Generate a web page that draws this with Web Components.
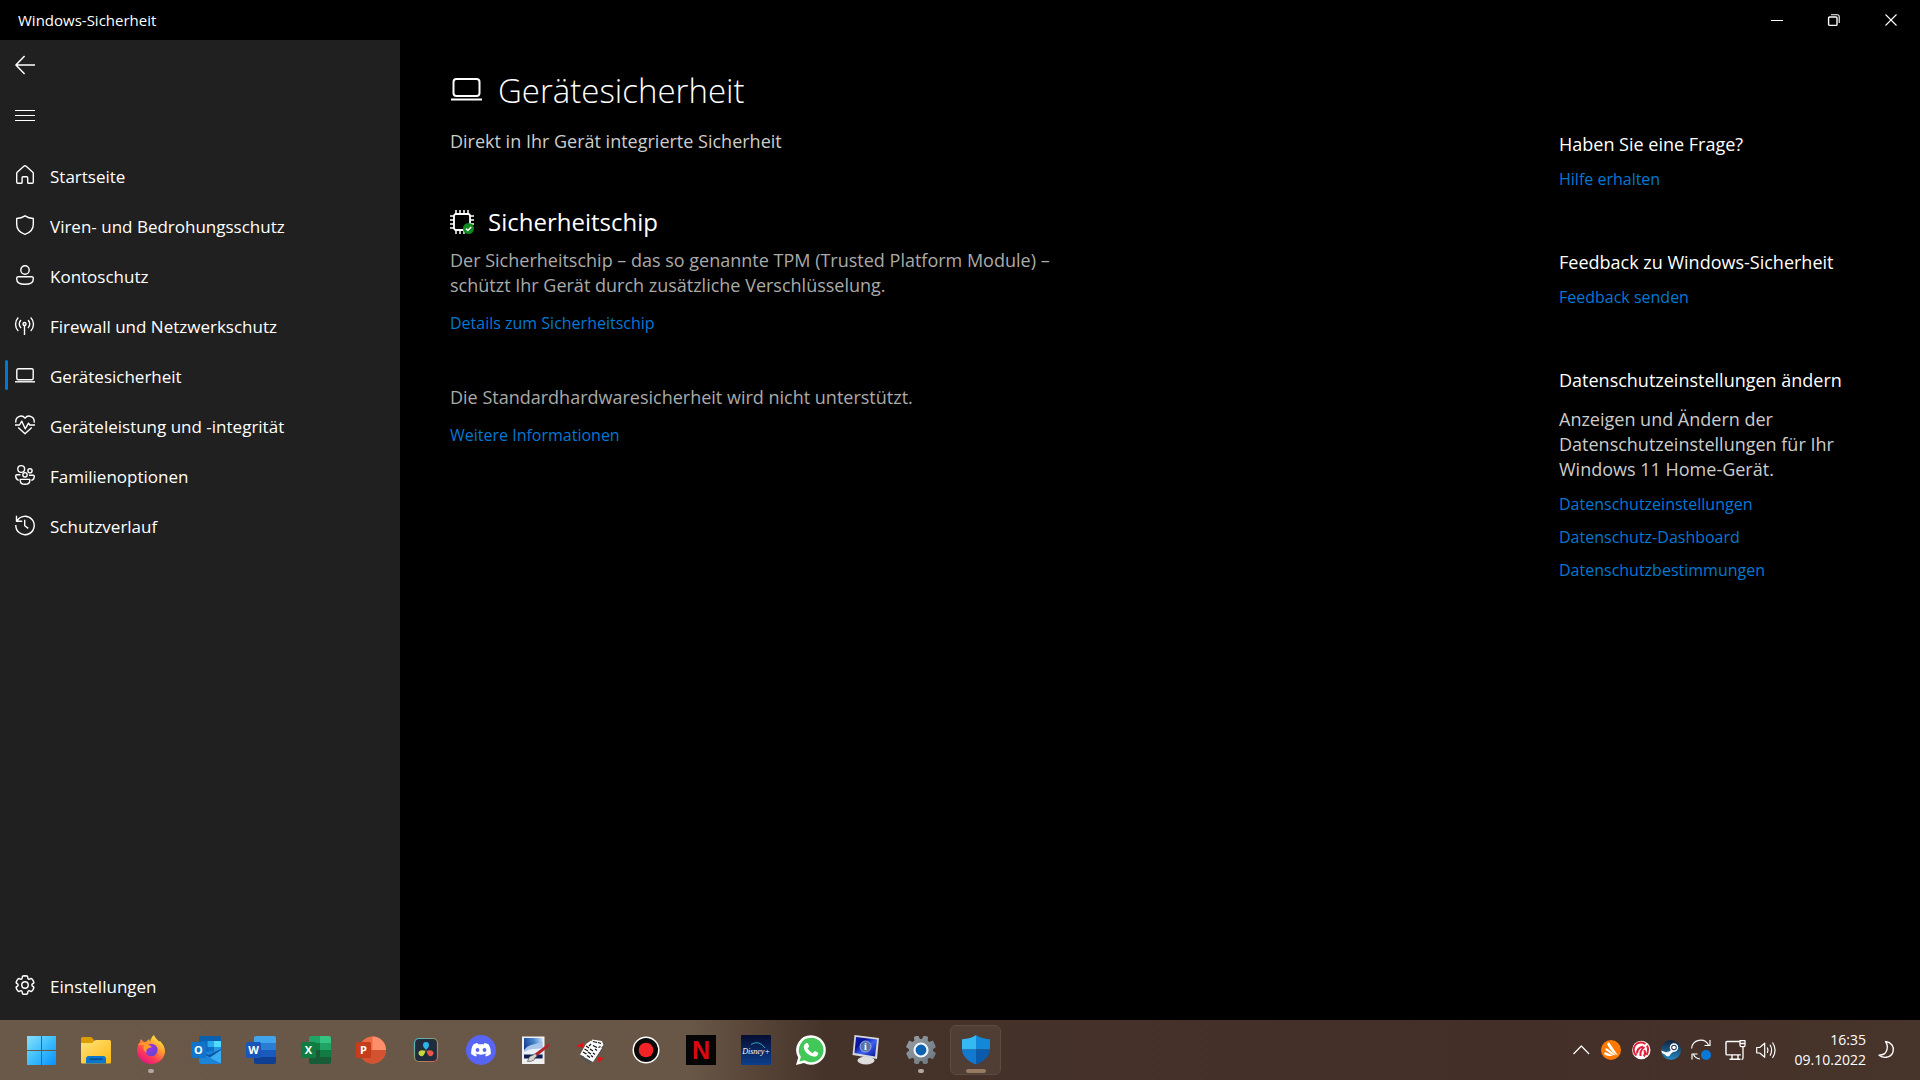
<!DOCTYPE html>
<html lang="de">
<head>
<meta charset="utf-8">
<meta name="viewport" content="width=device-width, initial-scale=1">
<title>Windows-Sicherheit</title>
<style>
	html, body {
		height: 100%;
		margin: 0;
	}
	body {
		background: #000;
		color: #fff;
		font: 18px/25px "Segoe UI", "Open Sans", "Noto Sans", sans-serif;
		--accent: #0078d4;
	}
</style>
</head>
<body>
<security-app></security-app>

<script>
(function() {
	const gear = "M12.012 2.25c.734.008 1.465.093 2.182.253a.75.75 0 0 1 .582.649l.17 1.527a1.384 1.384 0 0 0 1.927 1.116l1.401-.615a.75.75 0 0 1 .85.174 9.792 9.792 0 0 1 2.204 3.792.75.75 0 0 1-.271.825l-1.242.916a1.381 1.381 0 0 0 0 2.226l1.243.915a.75.75 0 0 1 .272.826 9.797 9.797 0 0 1-2.204 3.792.75.75 0 0 1-.848.175l-1.407-.617a1.38 1.38 0 0 0-1.926 1.114l-.169 1.526a.75.75 0 0 1-.572.647 9.518 9.518 0 0 1-4.406 0 .75.75 0 0 1-.572-.647l-.168-1.524a1.382 1.382 0 0 0-1.926-1.11l-1.406.616a.75.75 0 0 1-.849-.175 9.798 9.798 0 0 1-2.204-3.796.75.75 0 0 1 .272-.826l1.243-.916a1.38 1.38 0 0 0 0-2.226l-1.243-.914a.75.75 0 0 1-.271-.826 9.793 9.793 0 0 1 2.204-3.792.75.75 0 0 1 .85-.174l1.4.615a1.387 1.387 0 0 0 1.93-1.118l.17-1.526a.75.75 0 0 1 .583-.65c.717-.159 1.45-.243 2.201-.252z";

	// name: [viewBox size, markup]
	const icons = {
		back: [20, `<path d="M20 10H1M9.6 1 .9 10l8.7 9" stroke-width="1.5"/>`],
		menu: [20, `<path d="M0 5.5h20M0 10.5h20M0 15.5h20" stroke-width="1"/>`],
		home: [20, `<path d="M9.1 1.1 2.2 7.2q-.5.5-.5 1.2v8.700q0 1.200 1.200 1.200h3.300q.9 0 .9-.9v-4.700q0-.9.9-.9h3.800q.9 0 .9.9v4.700q0 .9.9.9h3.500q1.200 0 1.200-1.200V8.400q0-.7-.5-1.200L10.900 1.100q-.9-.7-1.800 0z"/>`],
		shield: [20, `<path d="M10 .8C7.600 2.400 5 3.300 1.700 3.500v6c0 4.900 3 8 8.300 9.900 5.300-1.900 8.300-5 8.300-9.900v-6C15 3.300 12.400 2.400 10 .8z"/>`],
		account: [20, `<circle cx="10" cy="5" r="4.200"/><path d="M3.200 11.800h13.600q1.500 0 1.500 1.500v.7c0 3.500-3.300 5.300-8.300 5.300S1.700 17.500 1.700 14v-.7q0-1.500 1.500-1.500z"/>`],
		firewall: [20, `<circle cx="9.500" cy="9" r="1.500"/><path d="M9.500 10.500V20M6 12.900a5.200 5.200 0 0 1 0-7.800M13 5.100a5.200 5.200 0 0 1 0 7.800M3.300 15.900a9.500 9.500 0 0 1 0-13.400M15.700 2.500a9.500 9.500 0 0 1 0 13.400"/>`],
		laptop: [20, `<rect x="1.800" y="3.800" width="16.400" height="11" rx="1.500"/><path d="M0 16.800h20"/>`],
		laptopBig: [32, `<rect x="3.500" y="4" width="26" height="17" rx="3" stroke-width="2"/><path d="M1 24.500h31" stroke-width="2"/>`],
		heart: [20, `<path d="M.8 7.600C.1 1.700 6.800-1 10 3.200 13.200-1 19.900 1.700 19.200 7.600M3.200 12.500 10 18.800l6.800-6.300M0 10h4.500l2.300-3.800 3.400 7.600 3.300-5.600L14.800 10H20"/>`],
		family: [20, `<circle cx="6.200" cy="4" r="3.400"/><circle cx="15" cy="5.800" r="2.100"/><circle cx="10" cy="9.800" r="2.200"/><path d="M5.200 14.400h9.600v1.100c0 2.400-1.900 3.800-4.800 3.800s-4.800-1.400-4.800-3.800zM5.500 9.800H1.800Q.7 9.800.7 11c0 2.200 1.200 3.800 3 4.400M14 10.200h4.200q1.100 0 1.100 1.100c0 2.200-1 3.700-3 4"/>`],
		history: [20, `<path d="M1.900 6.100A9.200 9.200 0 1 1 .8 10M1.500 .8v5.500h5.700M9.700 4.800v5.900l3.600 2.700"/>`],
		settings: [20, `<g transform="translate(-1.400 -1.400) scale(.95)"><path d="${gear}" stroke-width="1.500"/><circle cx="12" cy="12" r="3.400" stroke-width="1.500"/></g>`],
		chip: [24, `<rect x="4" y="4" width="16" height="16" rx="2" stroke-width="1.800"/>
			<path d="M6 0v4M10 0v4M14 0v4M18 0v4M6 20v4M10 20v4M14 20v4M0 6h4M0 10h4M0 14h4M0 18h4M20 6h4M20 10h4M20 14h4" stroke-width="1.500"/>
			<circle cx="18.500" cy="18.500" r="5.500" fill="#0f8a1c" stroke="none"/><path d="m15.900 18.600 1.900 1.900 3.400-3.600" stroke-width="1.500"/>`],
		minimize: [12, `<path d="M0 6.500h12" stroke-width="1"/>`],
		restore: [12, `<rect x=".6" y="3" width="8.400" height="8.400" rx="1"/><path d="M3 .8h6.200q2 0 2 2V9" stroke-width="1.100"/>`],
		close: [12, `<path d="m.5.500 11 11m0-11-11 11" stroke-width="1.100"/>`],

		start: [30, `<defs><linearGradient id="g" x1="0" y1="0" x2="30" y2="30" gradientUnits="userSpaceOnUse"><stop stop-color="#8ee2ff"/><stop offset=".5" stop-color="#3fc0fc"/><stop offset="1" stop-color="#0790fb"/></linearGradient></defs>
			<path d="M1 1h14v14H1zM16 1h14v14H16zM1 16h14v14H1zM16 16h14v14H16z" fill="url(#g)" stroke="none"/>`],
		explorer: [30, `<defs><linearGradient id="g" x2="1" y2="1"><stop stop-color="#ffe27a"/><stop offset="1" stop-color="#fdb913"/></linearGradient></defs>
			<g stroke="none"><path d="M0 3.500Q0 2 1.500 2h8q1 0 2 1.200L13 5v6H0z" fill="#dc9d04"/>
			<path d="M0 8h10.500q1 0 2-1.500T15 5h13.500Q30 5 30 6.500v20.800q0 1.200-1.200 1.200H1.200Q0 28.500 0 27.300z" fill="url(#g)"/>
			<path d="M5 28.500V24q0-3 3-3h14q3 0 3 3v4.500z" fill="#0a76cc"/><path d="M8.500 24.200h13" stroke="#074c8c" stroke-width="1.500"/></g>`],
		firefox: [30, `<defs><linearGradient id="g" x1=".9" y1=".1" x2=".3" y2="1"><stop stop-color="#fff14a"/><stop offset=".35" stop-color="#ffa22c"/><stop offset=".7" stop-color="#ff3d54"/><stop offset="1" stop-color="#e31587"/></linearGradient>
			<linearGradient id="p" x2="1" y2="1"><stop stop-color="#b12cf2"/><stop offset="1" stop-color="#5848c8"/></linearGradient></defs>
			<g stroke="none"><path d="M18 0c1 3 3.500 4.500 5 6.500l1-.5C28 10 29 13.500 29 16.500 28.500 24 22.500 29 15 29S1 23 1 15.500C1 12 2.300 8.500 4 7L4.500 4 8 7l2.500-.5L13 4l1 3C14.500 4 16 1.500 18 0z" fill="url(#g)"/>
			<circle cx="15.300" cy="15" r="6.300" fill="url(#p)"/>
			<path d="M2 10c3-3.500 8-3 11 0l3 2-4 1.500c-1.500.5-2 2-1.500 4-3-1-4-5-2-7.500-2-.5-4 0-6.500 0z" fill="#ff9a2b"/></g>`],
		outlook: [30, `<g stroke="none"><path d="M8 3q0-2 2-2h18q2 0 2 2v24q0 2-2 2H10q-2 0-2-2z" fill="#0a5fae"/>
			<path d="M10 6h6.500v6H10zM10 12h6.500v7H10z" fill="#0f6cc0"/><path d="M16.500 6H23v6h-6.500z" fill="#29a8ea"/><path d="M23 6h7v6h-7z" fill="#52d9ff"/><path d="M16.500 12H23v7h-6.500z" fill="#0f6fc6"/><path d="M23 12h7v6h-7z" fill="#2197e6"/>
			<path d="M8 17l22-1v11q0 2-2 2H10q-2 0-2-2z" fill="#1b84d8"/><path d="M8 17l22 11.500V15L19 21.500z" fill="#3aaef2"/><path d="M8 17l11 5.500L30 15v-1L18 20z" fill="#0a54a4"/>
			<rect x="0" y="7" width="15" height="16" rx="1.500" fill="#0f74cc"/><text x="7.500" y="19" fill="#fff" font-size="11" font-weight="700" text-anchor="middle">O</text></g>`],
		word: [30, `<g stroke="none"><path d="M8 3q0-2 2-2h18q2 0 2 2v5H8z" fill="#41a5ee"/><path d="M8 8h22v7H8z" fill="#2b7cd3"/><path d="M8 15h22v7H8z" fill="#185abd"/><path d="M8 22h22v5q0 2-2 2H10q-2 0-2-2z" fill="#103f91"/>
			<rect x="0" y="7" width="15" height="16" rx="1.500" fill="#1857b8"/><text x="7.500" y="19" fill="#fff" font-size="11" font-weight="700" text-anchor="middle">W</text></g>`],
		excel: [30, `<g stroke="none"><path d="M8 3q0-2 2-2h9v7H8z" fill="#21a366"/><path d="M19 1h9q2 0 2 2v5H19z" fill="#33c481"/><path d="M8 8h11v7H8z" fill="#107c41"/><path d="M19 8h11v7H19z" fill="#21a366"/><path d="M19 15h11v7H19z" fill="#107c41"/><path d="M8 15h11v7h11v5q0 2-2 2H10q-2 0-2-2z" fill="#185c37"/>
			<rect x="0" y="7" width="15" height="16" rx="1.500" fill="#107c41"/><text x="7.500" y="19" fill="#fff" font-size="11" font-weight="700" text-anchor="middle">X</text></g>`],
		powerpoint: [30, `<g stroke="none"><circle cx="16.500" cy="15" r="13.500" fill="#ed6c47"/><path d="M16.500 1.500A13.500 13.500 0 0 1 30 15H16.500z" fill="#ff8f6b"/><path d="M3 15h27a13.500 13.500 0 0 1-27 0z" fill="#d35230"/>
			<rect x="0" y="7" width="15" height="16" rx="1.500" fill="#c43e1c"/><text x="7.500" y="19" fill="#fff" font-size="11" font-weight="700" text-anchor="middle">P</text></g>`],
		resolve: [30, `<defs><linearGradient id="g" x2="1" y2="1"><stop stop-color="#3fc1d8"/><stop offset=".45" stop-color="#8f9a6a"/><stop offset="1" stop-color="#e0604f"/></linearGradient></defs>
			<rect x="3.500" y="3.500" width="23" height="23" rx="4.500" fill="#1f2c3d" stroke="url(#g)" stroke-width="1.200"/>
			<g stroke="none" transform="translate(-.5)"><path d="M15.500 15c-1.500-1.500-3-3-3-5a3 3 0 0 1 6 0c0 2-1.500 3.500-3 5z" fill="#2bb5e8"/><path d="M15 15.800c-.5 2-1.200 4.300-2.800 5.100a3 3 0 0 1-3.200-5c1.800-1.200 4-.7 6-.1z" fill="#c5d93a"/><path d="M16 15.800c2-.6 4.200-1.100 6 .1a3 3 0 0 1-3.200 5c-1.600-.8-2.300-3.100-2.800-5.100z" fill="#ee5548"/></g>`],
		discord: [30, `<g stroke="none"><circle cx="15" cy="15" r="15" fill="#5865f2"/>
			<path d="M11.500 8c-2 .3-3.500 1-4.200 1.600C5.500 12.500 5 16.500 5.200 19c1.500 1.200 3 2 4.800 2.400l1-1.700-1.500-.8.300-.3c3.400 1.500 7 1.500 10.400 0l.3.300-1.500.8 1 1.700c1.800-.4 3.300-1.200 4.800-2.400.3-3.400-.5-6.600-2.100-9.400C22 9 20.500 8.300 18.500 8l-.6 1.200h-5.800z" fill="#fff"/><circle cx="11.500" cy="15" r="1.900" fill="#5865f2"/><circle cx="18.500" cy="15" r="1.900" fill="#5865f2"/></g>`],
		paint: [30, `<defs><linearGradient id="g" x1="1" y1="0" x2="0" y2=".4"><stop stop-color="#cfe0f5"/><stop offset=".45" stop-color="#4a86cf"/><stop offset="1" stop-color="#123f94"/></linearGradient></defs>
			<g stroke="none"><path d="M1 1.500h22.500v27.500H1z" fill="#f0f0f0"/><path d="M3 3h18.500v20H3z" fill="url(#g)"/><path d="M3 15q3-4 7-5t11.500-3v13H3z" fill="#a9c6ea"/><path d="M3 17q5-3 9-3t9.500-1v7H3z" fill="#e8f0fa"/><path d="M3 19.500h18.500v4H3z" fill="#111f55"/>
			<path d="M27.500 8.500 14 18.500l2.200 2.500L29 10.500z" fill="#b3252d"/><path d="m14 18.500-2.500 2q-1.500-.5-3.500 2L6.500 26.500q4 .3 6.500-1.500 1-1 .7-2l2.500-2z" fill="#d6d2cc" stroke="#444" stroke-width=".6"/></g>`],
		cards: [30, `<g stroke="none"><path d="M.5 11.500 3 9.500l1.500 0L7 7.500V13l-2-1.500-1.500.5zM28 22.500 22.500 27.500l-.5-5 2-.5 1.500 1z" fill="#f00d12"/>
			<path d="m11 9 6-4 4 1 7 1 0 5-6 9-8 8-8-5-2-5z" fill="#555"/>
			<path d="m10 9 5-3.500 5 4-7 14.500-9-4.500z" fill="#fff"/><path d="m16 4.500 10 1.500 1.500 4-5 6-6-5z" fill="#f8f8f8"/><path d="m17 8 9 5-9 14-9-5z" fill="#fafafa"/></g>
			<path d="m10 11 3 2m-4.500 1 3.500 2m-5 1 3.500 2M17 6.500l4 1m1 0 3 1m-8 2 4 2m1.500 0 2-1M14 14l3 2m2-2 2 1.500M12 17l3 2m2-1 2 1.500M11 20.500l3 2m1-2 2 1.500M13 11l2-2" stroke="#111" stroke-width="1.200"/>`],
		record: [30, `<g stroke="none"><circle cx="15" cy="15" r="13.500" fill="#fff"/><circle cx="15" cy="15" r="12" fill="#090909"/><circle cx="15" cy="15" r="7.300" fill="#f32428"/></g>`],
		netflix: [30, `<path d="M0 0h30v30H0z" fill="#050505" stroke="none"/><text x="15" y="24" fill="#d90813" stroke="none" font-family="Liberation Sans Narrow, Liberation Sans, sans-serif" font-size="25" text-anchor="middle" font-weight="700">N</text>`],
		disney: [30, `<defs><linearGradient id="g" x2="0" y2="1"><stop stop-color="#060d31"/><stop offset="1" stop-color="#0c3f8c"/></linearGradient></defs>
			<rect width="30" height="30" rx="1" fill="url(#g)" stroke="none"/><path d="M10 9.500q8-5 14 3.500" stroke="#2aa6c4" stroke-width="1"/>
			<text x="15" y="19" fill="#fff" stroke="none" font-family="Liberation Serif, serif" font-style="italic" font-size="8" text-anchor="middle">Disney+</text>`],
		whatsapp: [30, `<g stroke="none"><path d="M15.200.200A14.800 14.800 0 1 1 8 28L0 30l2.200-7.600A14.800 14.800 0 0 1 15.200.200z" fill="#fff"/><path d="M15.200 2.700A12.300 12.300 0 1 1 8.500 25.300l-5 1.300 1.400-4.800A12.300 12.300 0 0 1 15.200 2.700z" fill="#42c758"/>
			<path d="M10.700 8q.9-.3 1.300.6l1 2.300q.2.600-.2 1.100l-1.200 1.400q1.700 3.200 5.100 4.800l1.500-1.800q.5-.5 1.100-.2l2.500 1.200q.7.400.4 1.300c-.6 2.300-2.600 3.300-4.700 2.900-5.300-1-9-5-9.700-8.800-.3-2 .8-4.200 2.900-4.800z" fill="#fff"/></g>`],
		monitor: [30, `<defs><linearGradient id="g" x2="1" y2="1"><stop stop-color="#0b1fa6"/><stop offset=".3" stop-color="#0a10a0"/><stop offset=".55" stop-color="#3d62f2"/><stop offset="1" stop-color="#0a0f8c"/></linearGradient></defs>
			<g stroke="none"><path d="m12 21 8 1 1 4h-9z" fill="#aaa"/><ellipse cx="15" cy="25.500" rx="8.500" ry="4" fill="#dedede"/><path d="m3.500 0 24.500 3-2 21-24.500-4z" fill="#d5d7dc"/><path d="m5 2 21 2.500-2 17L3.500 18z" fill="url(#g)"/>
			<circle cx="14.500" cy="11.500" r="5.500" fill="#5673a8" stroke="#a9bdf0" stroke-width=".8"/><text x="14.500" y="15" fill="#fff" font-family="Liberation Serif, serif" font-weight="700" font-size="10" text-anchor="middle">i</text></g>`],
		gearColor: [30, `<defs><linearGradient id="g" x2="1" y2="1"><stop stop-color="#98a1a8"/><stop offset="1" stop-color="#69737b"/></linearGradient></defs>
			<path d="M10 1h2.500l1.500 3h2l1.500-3H20l2 1-.3 3.800 1.800 1.300 3.400-1.500L29.500 11l.3 1.200L27 14.300v1.400l2.800 2.300-.3 1.200-2.600 5-3.400-1.500-1.800 1.300L22 28l-2 1h-2.500L16 26h-2l-1.500 3H10l-2-1 .3-4-1.800-1.300-3.400 1.500L.5 19.200.2 18 3 15.700v-1.400L.2 12.200.5 11l2.600-5.400 3.400 1.500 1.800-1.300L8 2z" fill="url(#g)" stroke="none"/><circle cx="15" cy="15" r="6.500" fill="#0b62b0" stroke="#eef3f7" stroke-width="2.200"/>`],
		defender: [30, `<g stroke="none"><path d="M15 0C11.500 2.500 7 4 1 4.300v10.200h14z" fill="#35b9f2"/><path d="M15 0c3.500 2.500 8 4 14 4.300v10.200H15z" fill="#1488d8"/><path d="M1 14.500C1.500 21.500 7 26.500 15 29.500v-15z" fill="#1279cf"/><path d="M29 14.500C28.500 21.500 23 26.500 15 29.500v-15z" fill="#0a5bab"/></g>`],

		chevron: [20, `<path d="m2.500 14 7.800-8 7.800 8" stroke-width="1.200"/>`],
		avast: [20, `<g stroke="none"><circle cx="10" cy="10" r="10" fill="#ff7800"/><path d="M6.500 3q1.500-1 2.200.3L17 15.500q-7-3.500-9.500-8.700Q5.500 4.200 6.500 3zM4.500 8.500q1-.8 2 .2l8.500 6.500q-5 0-8.500-3.700-3-2-2-3zM3.200 13q.8-1.200 2-.5l6.800 3q-4 1.300-7.500-.2-1.800-.8-1.300-2.300z" fill="#fff"/></g>`],
		avira: [20, `<g stroke="none"><circle cx="10.300" cy="10" r="9.200" fill="#fff"/></g><path d="M5.500 15.500A7.300 7.300 0 0 1 14.500 4M6 13.500Q6 8 12 6.500M9.500 16v-3.500q.5-3 4-5.500M13 16.500q2-3 .3-6.500M16 5.500q2.300 4.500-.5 9.500" stroke="#e2203c" stroke-width="2"/>`],
		steam: [20, `<defs><linearGradient id="g" x2="0" y2="1"><stop stop-color="#12203d"/><stop offset="1" stop-color="#2389c2"/></linearGradient></defs>
			<g stroke="none"><circle cx="10" cy="10" r="10" fill="url(#g)"/><path d="m.3 10.500 6.500 2.500 3.500-3.500 3 1.500-4.500 3.500q-2.500 3-5 0L1 13z" fill="#fff"/></g><circle cx="13" cy="7.500" r="3.500" fill="#1a3355" stroke="#fff" stroke-width="1.400"/><circle cx="13" cy="7.500" r="1.800" fill="#fff" stroke="none"/><circle cx="7" cy="14" r="2" stroke="#fff" stroke-width="1"/>`],
		sync: [20, `<path d="M.6 8.500A9 9 0 0 1 17.500 5M19 0v5.500h-5.500M1 19.500V14h5.500M2.500 14.500q2 4 6.500 4.500" stroke-width="1.200"/><circle cx="15" cy="15" r="5" fill="#0a78d6" stroke="none"/>`],
		network: [20, `<path d="M14 1.500H1.200Q0 1.500 0 2.700v11q0 1.200 1.200 1.200h13.600M6 15v4M12 15v4M3.500 19.300h11" stroke-width="1.400"/><path d="M14 .7h5v4.500q0 1.500-1.500 1.500h-2Q14 6.700 14 5.200zM14 3.500h5M17 6.700V18q0 1.500-1.500 1.500" stroke-width="1.300"/>`],
		sound: [20, `<path d="M.7 7.500V13h3l5 4.200V3.200l-5 4.300zM11.300 7.500q1.500 2.700 0 5.400M14 4.800q3.300 5.400 0 10.800M16.500 2.500q5.200 7.700 0 15.400" stroke-width="1.200"/>`],
		moon: [20, `<path d="M9.500 1.500c6 .8 8.800 5.200 7.600 10-1.300 5-8 8.300-14.100 3.700 4.200 0 7.200-2.100 8-5.700.7-3 .2-5.700-1.500-8z" stroke-width="1.300"/>`]
	};

	// Shared base: every element gets an open shadow root from its render() markup
	class BaseElement extends HTMLElement {
		constructor() {
			super();
			this._shadowRoot = this.attachShadow({mode: "open"});
		}

		connectedCallback() {
			let template = document.createElement("template");
			template.innerHTML = this.render();
			this._shadowRoot.replaceChildren(template.content.cloneNode(true));
		}

		attr(name) {
			return this.getAttribute(name) || "";
		}
	}

	class UiIcon extends BaseElement {
		render() {
			let [box, markup] = icons[this.attr("name")];
			return `
				<style>
				:host { display: block; flex: none; width: 20px; height: 20px; }
				svg { display: block; width: 100%; height: 100%; overflow: visible; }
				</style>
				<svg viewBox="0 0 ${box} ${box}" fill="none" stroke="currentColor" stroke-width="1.4" stroke-linejoin="round" aria-hidden="true">${markup}</svg>
			`;
		}
	}

	class TitleBar extends BaseElement {
		render() {
			return `
				<style>
				:host { display: flex; align-items: stretch; height: 40px; padding-right: 1px; font-size: 15px; line-height: 40px; }
				.title { flex: 1; padding-left: 18px; }
				button { display: grid; place-items: center; width: 57px; padding: 0; border: 0; background: none; color: inherit; }
				button:hover { background: #2b2b2b; }
				ui-icon { width: 12px; height: 12px; }
				</style>
				<div class="title"><slot></slot></div>
				<button aria-label="Minimieren"><ui-icon name="minimize"></ui-icon></button>
				<button aria-label="Verkleinern"><ui-icon name="restore"></ui-icon></button>
				<button aria-label="Schließen"><ui-icon name="close"></ui-icon></button>
			`;
		}
	}

	class NavItem extends BaseElement {
		render() {
			return `
				<style>
				:host { display: block; font-size: 17px; }
				a { display: flex; align-items: center; gap: 15px; height: 50px; padding-left: 15px; color: inherit; text-decoration: none; }
				a:hover { background: #2d2d2d; }
				span { padding-top: 2px; }
				:host([selected]) a { padding-left: 7px; }
				:host([selected]) a::before { content: ""; width: 3px; height: 30px; margin-left: -2px; margin-right: -8px; border-radius: 2px; background: var(--accent); }
				</style>
				<a href="#"${this.hasAttribute("selected") ? ` aria-current="page"` : ""}><ui-icon name="${this.attr("icon")}"></ui-icon><span><slot></slot></span></a>
			`;
		}
	}

	class NavPane extends BaseElement {
		render() {
			return `
				<style>
				:host { display: flex; flex-direction: column; flex: none; width: 400px; box-sizing: border-box; padding-bottom: 10px; background: #202020; }
				button { display: grid; place-items: center; width: 50px; height: 50px; padding: 0; border: 0; background: none; color: inherit; }
				nav { flex: 1; padding-top: 10px; }
				</style>
				<button aria-label="Zurück"><ui-icon name="back"></ui-icon></button>
				<button aria-label="Navigation"><ui-icon name="menu"></ui-icon></button>
				<nav><slot></slot></nav>
				<slot name="footer"></slot>
			`;
		}
	}

	class TextLink extends BaseElement {
		render() {
			return `
				<style>
				:host { display: block; font-size: 16px; }
				a { color: var(--accent); text-decoration: none; }
				a:hover { color: #888; }
				</style>
				<a href="#"><slot></slot></a>
			`;
		}
	}

	class PageHeader extends BaseElement {
		render() {
			return `
				<style>
				:host { display: block; }
				.row { display: flex; align-items: center; gap: 16px; }
				h1 { margin: 0; font-size: 33px; line-height: 48px; font-weight: 300; }
				ui-icon { width: 32px; height: 32px; }
				p { margin: 14px 0 0; color: #ccc; }
				</style>
				<div class="row"><ui-icon name="${this.attr("icon")}"></ui-icon><h1>${this.attr("heading")}</h1></div>
				<p><slot></slot></p>
			`;
		}
	}

	class SecuritySection extends BaseElement {
		render() {
			let heading = this.attr("heading");
			return `
				<style>
				:host { display: block; max-width: 600px; color: #aaa; }
				h2 { display: flex; align-items: center; gap: 14px; margin: 0 0 9px; color: #fff; font-size: 24px; line-height: 34px; font-weight: 400; }
				h2 ui-icon { width: 24px; height: 24px; }
				p { margin: 0 0 13px; }
				</style>
				${heading ? `<h2><ui-icon name="${this.attr("icon")}"></ui-icon>${heading}</h2>` : ""}
				<p><slot></slot></p>
				<slot name="link"></slot>
			`;
		}
	}

	class HelpGroup extends BaseElement {
		render() {
			return `
				<style>
				:host { display: flex; flex-direction: column; gap: 8px; color: #ccc; }
				h3 { margin: 0 0 2px; color: #fff; font-size: 18px; line-height: 26px; font-weight: 400; }
				::slotted(p) { margin: 4px 0 2px; }
				</style>
				<h3>${this.attr("heading")}</h3>
				<slot></slot>
			`;
		}
	}

	class TaskButton extends BaseElement {
		render() {
			return `
				<style>
				:host { display: grid; place-items: center; width: 55px; }
				button { position: relative; display: grid; place-items: center; box-sizing: border-box; width: 51px; height: 50px; padding: 0; border: 1px solid transparent; border-radius: 6px; background: none; color: inherit; font: inherit; }
				ui-icon { width: 30px; height: 30px; }
				:host([active]) button { border-color: #5d4b42; background: #503e35; }
				:host([running]) button::after { content: ""; position: absolute; bottom: 1px; width: 6px; height: 4px; border-radius: 2px; background: #b1a8a1; }
				:host([active]) button::after { width: 20px; background: #987a62; }
				</style>
				<button aria-label="${this.attr("label")}"><ui-icon name="${this.attr("icon")}"></ui-icon></button>
			`;
		}
	}

	class TaskBar extends BaseElement {
		render() {
			let tray = [["chevron", "Ausgeblendete Symbole"], ["avast", "Avast"], ["avira", "Avira"], ["steam", "Steam"], ["sync", "Update"]];
			let button = ([icon, label]) => `<button aria-label="${label}"><ui-icon name="${icon}"></ui-icon></button>`;
			return `
				<style>
				:host { display: flex; justify-content: space-between; height: 60px; background: linear-gradient(90deg, #6a5848 0, #685646 36%, #453229 43%, #432f28 80%, #47342a 100%); }
				div { display: flex; align-items: center; }
				.apps { padding-left: 13px; align-items: stretch; }
				.tray { padding-right: 19px; }
				button { display: grid; place-items: center; width: 30px; height: 50px; padding: 0; border: 0; background: none; color: inherit; font: inherit; }
				.system { display: flex; align-items: center; gap: 10px; width: auto; padding: 0 10px; }
				.clock { display: block; width: auto; padding: 0 5px 0 9px; font-size: 14px; line-height: 20px; text-align: right; }
				</style>
				<div class="apps"><slot></slot></div>
				<div class="tray">
					${tray.map(button).join("")}
					<button class="system" aria-label="Netzwerk und Lautstärke"><ui-icon name="network"></ui-icon><ui-icon name="sound"></ui-icon></button>
					<button class="clock">16:35<br>09.10.2022</button>
					${button(["moon", "Benachrichtigungen"])}
				</div>
			`;
		}
	}

	class SecurityApp extends BaseElement {
		render() {
			return `
				<style>
				:host { display: flex; flex-direction: column; min-height: 100vh; }
				.window { display: flex; flex: 1; }
				main { display: flex; flex: 1; justify-content: space-between; gap: 40px; padding: 27px 71px 40px 50px; }
				.sections { display: flex; flex-direction: column; gap: 49px; padding-top: 51px; }
				aside { display: flex; flex-direction: column; flex: none; gap: 57px; width: 290px; padding-top: 64px; }
				</style>
				<title-bar>Windows-Sicherheit</title-bar>
				<div class="window">
					<nav-pane>
						<nav-item icon="home">Startseite</nav-item>
						<nav-item icon="shield">Viren- und Bedrohungsschutz</nav-item>
						<nav-item icon="account">Kontoschutz</nav-item>
						<nav-item icon="firewall">Firewall und Netzwerkschutz</nav-item>
						<nav-item icon="laptop" selected>Gerätesicherheit</nav-item>
						<nav-item icon="heart">Geräteleistung und -integrität</nav-item>
						<nav-item icon="family">Familienoptionen</nav-item>
						<nav-item icon="history">Schutzverlauf</nav-item>
						<nav-item icon="settings" slot="footer">Einstellungen</nav-item>
					</nav-pane>
					<main>
						<div>
							<page-header icon="laptopBig" heading="Gerätesicherheit">Direkt in Ihr Gerät integrierte Sicherheit</page-header>
							<div class="sections">
								<security-section icon="chip" heading="Sicherheitschip">
									Der Sicherheitschip – das so genannte TPM (Trusted Platform Module) – schützt Ihr Gerät durch zusätzliche Verschlüsselung.
									<text-link slot="link">Details zum Sicherheitschip</text-link>
								</security-section>
								<security-section>
									Die Standardhardwaresicherheit wird nicht unterstützt.
									<text-link slot="link">Weitere Informationen</text-link>
								</security-section>
							</div>
						</div>
						<aside>
							<help-group heading="Haben Sie eine Frage?">
								<text-link>Hilfe erhalten</text-link>
							</help-group>
							<help-group heading="Feedback zu Windows-Sicherheit">
								<text-link>Feedback senden</text-link>
							</help-group>
							<help-group heading="Datenschutzeinstellungen ändern">
								<p>Anzeigen und Ändern der Datenschutzeinstellungen für Ihr Windows 11 Home-Gerät.</p>
								<text-link>Datenschutzeinstellungen</text-link>
								<text-link>Datenschutz-Dashboard</text-link>
								<text-link>Datenschutzbestimmungen</text-link>
							</help-group>
						</aside>
					</main>
				</div>
				<task-bar>
					<task-button icon="start" label="Start"></task-button>
					<task-button icon="explorer" label="Explorer"></task-button>
					<task-button icon="firefox" label="Firefox" running></task-button>
					<task-button icon="outlook" label="Outlook"></task-button>
					<task-button icon="word" label="Word"></task-button>
					<task-button icon="excel" label="Excel"></task-button>
					<task-button icon="powerpoint" label="PowerPoint"></task-button>
					<task-button icon="resolve" label="DaVinci Resolve"></task-button>
					<task-button icon="discord" label="Discord"></task-button>
					<task-button icon="paint" label="Paint"></task-button>
					<task-button icon="cards" label="Karten"></task-button>
					<task-button icon="record" label="Aufnahme"></task-button>
					<task-button icon="netflix" label="Netflix"></task-button>
					<task-button icon="disney" label="Disney+"></task-button>
					<task-button icon="whatsapp" label="WhatsApp"></task-button>
					<task-button icon="monitor" label="Systeminformationen"></task-button>
					<task-button icon="gearColor" label="Einstellungen" running></task-button>
					<task-button icon="defender" label="Windows-Sicherheit" running active></task-button>
				</task-bar>
			`;
		}
	}

	customElements.define("ui-icon", UiIcon);
	customElements.define("title-bar", TitleBar);
	customElements.define("nav-item", NavItem);
	customElements.define("nav-pane", NavPane);
	customElements.define("text-link", TextLink);
	customElements.define("page-header", PageHeader);
	customElements.define("security-section", SecuritySection);
	customElements.define("help-group", HelpGroup);
	customElements.define("task-button", TaskButton);
	customElements.define("task-bar", TaskBar);
	customElements.define("security-app", SecurityApp);
})();
</script>
</body>
</html>
